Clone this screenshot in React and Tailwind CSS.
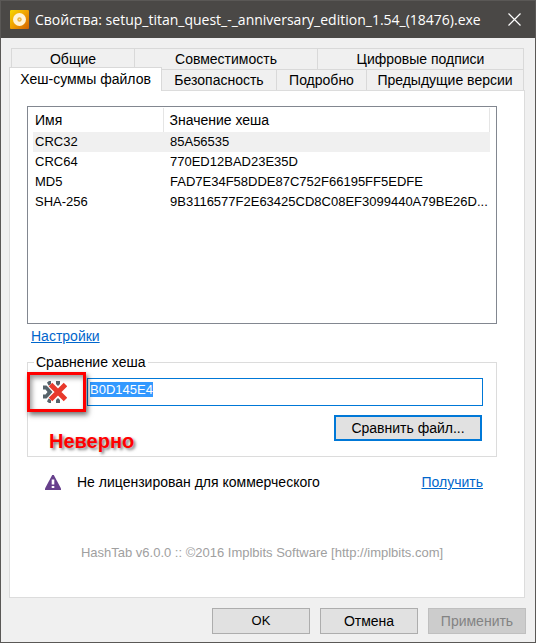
import React, { useEffect, useRef, useState } from "react";

const topTabs = ["Общие", "Совместимость", "Цифровые подписи"];
const bottomTabs = ["Безопасность", "Подробно", "Предыдущие версии"];

const hashes = [
  { name: "CRC32", value: "85A56535" },
  { name: "CRC64", value: "770ED12BAD23E35D" },
  { name: "MD5", value: "FAD7E34F58DDE87C752F66195FF5EDFE" },
  { name: "SHA-256", value: "9B3116577F2E63425CD8C08EF3099440A79BE26D..." },
];

function DiscIcon() {
  return (
    <svg width="19" height="19" viewBox="0 0 19 19" aria-hidden="true">
      <defs>
        <linearGradient id="disc" x1="0" y1="0" x2="1" y2="1">
          <stop offset="0" stopColor="#f6d800" />
          <stop offset="0.5" stopColor="#efa000" />
          <stop offset="1" stopColor="#d06000" />
        </linearGradient>
      </defs>
      <rect width="19" height="19" rx="1" fill="url(#disc)" />
      <circle cx="9.5" cy="9.5" r="6.5" fill="#fff3d6" />
      <circle cx="9.5" cy="9.5" r="2.2" fill="#e9b23c" />
      <circle cx="9.5" cy="9.5" r="0.8" fill="#fbe3a4" />
    </svg>
  );
}

function MismatchIcon() {
  return (
    <svg width="24" height="22" viewBox="0 0 24 22" aria-hidden="true">
      <g fill="#56636b">
        <path d="M0 4.500h3.500l2 2L9.500 11l-4 4.500-2 2H0v-4h2.500L4.500 11 2.500 8.500H0z" />
        <path d="M4 1.500L6 0h2v3.500L5.500 4.500z" />
        <path d="M13 0h4v3l-2 2-2-2z" />
        <path d="M4 20.500L6 22h2v-3.500L5.500 17.500z" />
        <path d="M13 22h4v-3l-2-2-2 2z" />
      </g>
      <path d="M7.500 3.500L22.500 18.500M22.500 3.500L7.500 18.500" stroke="#fff" strokeWidth="6" />
      <path d="M7.500 3.500L22.500 18.500M22.500 3.500L7.500 18.500" stroke="#e8392b" strokeWidth="5" />
    </svg>
  );
}

function WarningIcon() {
  return (
    <svg width="16" height="15" viewBox="0 0 16 15" aria-hidden="true">
      <path d="M7.200 0h1.600L16 13.500V15H0v-1.500z" fill="#67408c" />
      <path d="M6.700 4.500h2.600v5H6.700zM6.700 11h2.600v2H6.700z" fill="#fff" />
    </svg>
  );
}

function Tab({ children }) {
  return (
    <button role="tab" className="h-[21px] border-t border-r border-[#d9d9d9] leading-5">
      {children}
    </button>
  );
}

export default function App() {
  const [hash, setHash] = useState("B0D145E4");
  const inputRef = useRef(null);

  useEffect(() => {
    inputRef.current.focus();
    inputRef.current.select();
  }, []);

  return (
    <div className="border border-[#5a5856] bg-[#f0f0f0] font-['Liberation_Sans',Arial,sans-serif] text-[14px] leading-5 text-black">
      <header className="flex h-[37px] items-center bg-[#4a4846] pr-3.5 pl-[9px] text-white">
        <DiscIcon />
        <h1 className="ml-1.5 min-w-0 flex-1 truncate font-['Open_Sans','Noto_Sans',sans-serif] text-[14px]">
          Свойства: setup_titan_quest_-_anniversary_edition_1.54_(18476).exe
        </h1>
        <button aria-label="Закрыть">
          <svg width="13" height="13" viewBox="0 0 13 13">
            <path d="M0.500 0.500L12.500 12.500M12.500 0.500L0.500 12.500" stroke="#fff" strokeWidth="1.200" />
          </svg>
        </button>
      </header>

      <main className="pt-2.5 pr-2.5 pl-2">
        <div role="tablist" className="mr-px ml-0.5">
          <div className="grid grid-cols-[123fr_183fr_206fr] border-l border-[#d9d9d9]">
            {topTabs.map((tab) => (
              <Tab key={tab}>{tab}</Tab>
            ))}
          </div>
          <div className="-ml-0.5 grid grid-cols-[153fr_115fr_90fr_157fr]">
            <button
              role="tab"
              aria-selected="true"
              className="relative z-10 -mt-0.5 -mb-px h-6 border-x border-t border-[#d9d9d9] bg-white pb-0.5 leading-5"
            >
              Хеш-суммы файлов
            </button>
            {bottomTabs.map((tab) => (
              <Tab key={tab}>{tab}</Tab>
            ))}
          </div>
        </div>

        <section className="border border-[#dcdcdc] bg-white pt-[15px] pr-[27px] pb-[34px] pl-[17px]">
          <div className="h-[218px] border border-[#828790] pt-px pr-1.5 pl-[5px]">
            <table className="w-full table-fixed border-collapse text-left">
              <thead>
                <tr className="h-6">
                  <th className="w-[130px] border-r border-[#e5e5e5] p-0 pl-0.5 font-normal">Имя</th>
                  <th className="border-r border-[#e5e5e5] p-0 pl-1.5 font-normal">Значение хеша</th>
                </tr>
              </thead>
              <tbody className="text-[13px]">
                {hashes.map((row) => (
                  <tr key={row.name} className="h-5 first:bg-[#f0f0f0]">
                    <td className="p-0 pl-0.5">{row.name}</td>
                    <td className="p-0 pl-[7px] whitespace-nowrap">{row.value}</td>
                  </tr>
                ))}
              </tbody>
            </table>
          </div>

          <a href="#settings" className="mt-0.5 ml-1 inline-block text-[#0066cc] underline">
            Настройки
          </a>

          <fieldset className="mt-1.5 border border-[#dcdcdc] pr-[13px] pb-[13px]">
            <legend className="ml-1.5 px-0.5">
              <label htmlFor="hash">Сравнение хеша</label>
            </legend>
            <div className="relative mt-1.5 flex items-center">
              <div className="w-[59px] pl-[15px]">
                <MismatchIcon />
              </div>
              <div className="absolute top-[-6px] left-[-1px] h-10 w-[59px] border-3 border-[#ff0000] shadow-[2px_3px_5px_rgba(0,0,0,0.55),inset_2px_3px_5px_rgba(0,0,0,0.4)]" />
              <input
                ref={inputRef}
                id="hash"
                value={hash}
                onChange={(e) => setHash(e.target.value)}
                className="h-7 min-w-0 flex-1 border border-[#0078d7] bg-white px-0.5 pb-1.5 text-[13px] outline-none selection:bg-[#3399ff] selection:text-white"
              />
            </div>
            <div className="mt-[9px] flex justify-between pl-[21px]">
              <strong className="mt-4 -mb-2 text-[20px] leading-5 text-[#ff0000] [text-shadow:2px_2px_3px_rgba(0,0,0,0.5)]">
                Неверно
              </strong>
              <button className="mr-px h-[26px] w-[148px] border-2 border-[#0078d7] bg-[#e1e1e1]">
                Сравнить файл...
              </button>
            </div>
          </fieldset>

          <div className="mt-[15px] flex items-center pr-3.5 pl-[18px]">
            <WarningIcon />
            <span className="ml-4 flex-1">Не лицензирован для коммерческого</span>
            <a href="#buy" className="text-[#0066cc] underline">
              Получить
            </a>
          </div>

          <p className="mt-[51px] text-center text-[13px] text-[#a0a0a0]">
            HashTab v6.0.0 :: ©2016 Implbits Software [http://implbits.com]
          </p>
        </section>
      </main>

      <footer className="flex justify-end gap-2.5 pt-2.5 pr-[9px] pb-2">
        <button className="h-[26px] w-[98px] border border-[#adadad] bg-[#e1e1e1] text-[13px]">OK</button>
        <button className="h-[26px] w-[98px] border border-[#adadad] bg-[#e1e1e1]">Отмена</button>
        <button disabled className="h-[26px] w-[98px] border border-[#bfbfbf] bg-[#cccccc] text-[#838383]">
          Применить
        </button>
      </footer>
    </div>
  );
}
